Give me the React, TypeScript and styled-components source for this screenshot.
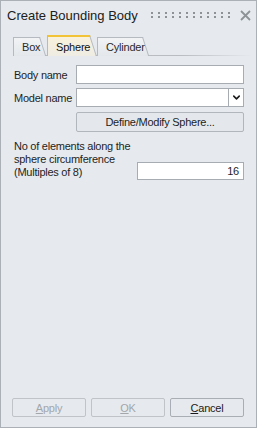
import styled, { createGlobalStyle } from 'styled-components'
import { ChevronDown } from 'lucide-react'

const GlobalStyle = createGlobalStyle`
  html, body {
    margin: 0;
    padding: 0;
    background: #e6eaee;
  }
  * {
    box-sizing: border-box;
  }
`

const tabs = [
  { label: 'Box', width: 26 },
  { label: 'Sphere', width: 42, active: true },
  { label: 'Cylinder', width: 45 },
]

const App = () => {
  return (
    <>
      <GlobalStyle />
      <Window>
        <TitleBar>
          <Title>Create Bounding Body</Title>
          <Grip width="82" height="8" viewBox="0 0 82 8">
            <defs>
              <pattern id="dots" width="7" height="4" patternUnits="userSpaceOnUse">
                <rect x="0" y="0" width="2" height="2" fill="#8d9297" />
              </pattern>
            </defs>
            <rect x="0" y="0" width="82" height="6" fill="url(#dots)" />
          </Grip>
          <Close width="11" height="11" viewBox="0 0 11 11">
            <path d="M1 1 L10 10 M10 1 L1 10" stroke="#8d9297" strokeWidth="1.8" />
          </Close>
        </TitleBar>

        <TabStrip>
          {tabs.map((t) => (
            <Tab key={t.label} w={t.width} active={!!t.active}>
              {t.label}
            </Tab>
          ))}
        </TabStrip>

        <Form>
          <Row>
            <Label>Body name</Label>
            <TextBox />
          </Row>
          <Row>
            <Label>Model name</Label>
            <Combo>
              <ComboField />
              <ComboButton>
                <ChevronDown size={11} strokeWidth={3.4} color="#1a1a1a" />
              </ComboButton>
            </Combo>
          </Row>
          <DefineButton>Define/Modify Sphere...</DefineButton>

          <ElementsRow>
            <MultiLabel>
              No of elements along the
              <br />
              sphere circumference
              <br />
              (Multiples of 8)
            </MultiLabel>
            <NumberBox>16</NumberBox>
          </ElementsRow>
        </Form>

        <Footer>
          <DialogButton disabled>
            <u>A</u>pply
          </DialogButton>
          <DialogButton disabled>
            <u>O</u>K
          </DialogButton>
          <DialogButton>
            <u>C</u>ancel
          </DialogButton>
        </Footer>
      </Window>
    </>
  )
}

export default App

const Window = styled.div`
  width: 257px;
  height: 428px;
  border: 1px solid #aab0b6;
  background: #e6eaee;
  display: flex;
  flex-direction: column;
  font-family: 'Liberation Sans', Arial, sans-serif;
  color: #1e1e1e;
`

const TitleBar = styled.div`
  height: 28px;
  display: flex;
  align-items: center;
  padding: 0 4px 0 6px;
`

const Title = styled.div`
  font-size: 13px;
  color: #202020;
  flex: 1;
  line-height: 15px;
  padding-top: 1px;
`

const Grip = styled.svg`
  display: block;
  margin-right: 7px;
  margin-top: 2px;
`

const Close = styled.svg`
  display: block;
  margin-right: 1px;
`

const TabStrip = styled.div`
  position: relative;
  margin-top: 5px;
  height: 22px;
  display: flex;
  align-items: flex-end;
  gap: 8px;
  padding-left: 12px;
  &::after {
    content: '';
    position: absolute;
    left: 12px;
    right: 4px;
    bottom: 0;
    height: 1px;
    background: linear-gradient(to right, #b9bdc2 70%, rgba(185, 189, 194, 0));
  }
`

const Tab = styled.div<{ w: number; active: boolean }>`
  position: relative;
  z-index: 1;
  width: ${({ w }) => w}px;
  height: ${({ active }) => (active ? 21 : 19)}px;
  padding-left: 8px;
  font-size: 11px;
  letter-spacing: -0.2px;
  line-height: ${({ active }) => (active ? 20 : 18)}px;
  white-space: nowrap;
  color: ${({ active }) => (active ? '#111' : '#2a2a2a')};
  border-left: 1px solid #b5bac0;
  border-top: ${({ active }) => (active ? '2px solid #f2c237' : '1px solid #b5bac0')};
  background: ${({ active }) =>
    active
      ? 'linear-gradient(#f8f1dc, #efece4)'
      : 'linear-gradient(#f1f3f5, #e3e7eb)'};
  &::after {
    content: '';
    position: absolute;
    z-index: -1;
    top: ${({ active }) => (active ? -2 : -1)}px;
    bottom: 0;
    right: -1px;
    width: 9px;
    border-top: ${({ active }) => (active ? '2px solid #f2c237' : '1px solid #b5bac0')};
    border-right: 1px solid #b5bac0;
    background: ${({ active }) =>
      active
        ? 'linear-gradient(#f8f1dc, #efece4)'
        : 'linear-gradient(#f1f3f5, #e3e7eb)'};
    transform-origin: top left;
    transform: skewX(18deg);
  }
`

const Form = styled.div`
  display: flex;
  flex-direction: column;
  padding: 9px 12px 0 13px;
  font-size: 11px;
  letter-spacing: -0.25px;
`

const Row = styled.div`
  display: flex;
  align-items: center;
  height: 19px;
  margin-bottom: 4px;
`

const Label = styled.div`
  width: 62px;
  flex-shrink: 0;
  white-space: nowrap;
`

const TextBox = styled.div`
  flex: 1;
  height: 19px;
  background: #fff;
  border: 1px solid #a7acb2;
`

const Combo = styled.div`
  flex: 1;
  height: 19px;
  display: flex;
  background: #fff;
  border: 1px solid #a7acb2;
`

const ComboField = styled.div`
  flex: 1;
`

const ComboButton = styled.div`
  width: 15px;
  display: flex;
  align-items: center;
  justify-content: center;
  border-left: 1px solid #a7acb2;
  background: #fff;
`

const DefineButton = styled.div`
  margin-left: 62px;
  margin-top: 1px;
  height: 20px;
  display: flex;
  align-items: center;
  justify-content: center;
  border: 1px solid #b1b6bc;
  border-radius: 2px;
  background: #e4e8ec;
  color: #1e1e1e;
`

const ElementsRow = styled.div`
  display: flex;
  align-items: flex-end;
  justify-content: space-between;
  margin-top: 8px;
`

const MultiLabel = styled.div`
  line-height: 13px;
  padding-bottom: 1px;
  white-space: nowrap;
`

const NumberBox = styled.div`
  width: 107px;
  height: 18px;
  background: #fff;
  border: 1px solid #a7acb2;
  text-align: right;
  padding-right: 4px;
  line-height: 16px;
`

const Footer = styled.div`
  margin-top: auto;
  display: flex;
  gap: 5px;
  padding: 0 11px 10px 11px;
`

const DialogButton = styled.div<{ disabled?: boolean }>`
  width: 74px;
  height: 19px;
  display: flex;
  align-items: center;
  justify-content: center;
  font-size: 11px;
  letter-spacing: -0.2px;
  border-radius: 2px;
  border: 1px solid ${({ disabled }) => (disabled ? '#c0c4c8' : '#a9aeb4')};
  color: ${({ disabled }) => (disabled ? '#a3a6aa' : '#1a1a1a')};
  background: #e6eaee;
`
